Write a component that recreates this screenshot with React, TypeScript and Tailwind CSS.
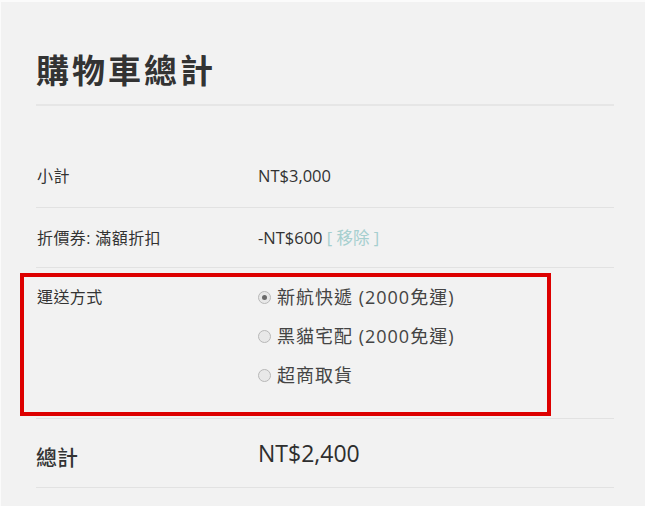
const font = "font-['Open_Sans','Noto_Sans_CJK_TC',sans-serif]";

type Row = { label: string; value: React.ReactNode; className: string };

function Radio({ checked }: { checked?: boolean }) {
  return (
    <span className="flex h-[13px] w-[13px] items-center justify-center rounded-full border border-[#b8b8b8] bg-[#e8e8e8]">
      {checked && <span className="h-[5px] w-[5px] rounded-full bg-[#6a6a6a]" />}
    </span>
  );
}

const shipping = [
  { name: "新航快遞 (2000免運)", checked: true },
  { name: "黑貓宅配 (2000免運)" },
  { name: "超商取貨" },
];

export default function App() {
  const rows: Row[] = [
    {
      label: "小計",
      value: "NT$3,000",
      className: "h-[62px] pt-[19px]",
    },
    {
      label: "折價券: 滿額折扣",
      value: (
        <span>
          -NT$600 <span className="text-[#a6cfcf]">[ 移除 ]</span>
        </span>
      ),
      className: "h-[60px] pt-[19px]",
    },
  ];

  return (
    <div
      className={`${font} relative h-[506px] w-[645px] overflow-hidden border-l border-t-2 border-[#fbfbfb] bg-[#f2f2f2] text-[#333]`}
    >
      <div className="ml-[35px] w-[578px]">
        <h2 className="border-b-2 border-[#e6e6e6] pb-[12px] pt-[48px] text-[33px] font-bold leading-[42px] tracking-[3px]">
          購物車總計
        </h2>

        <div className="mt-[40px]">
          {rows.map((row) => (
            <div
              key={row.label}
              className={`flex border-b border-[#e2e2e2] text-[16px] leading-[22px] ${row.className}`}
            >
              <div className="w-[222px] pl-px tracking-[0.4px]">{row.label}</div>
              <div className="text-[16.5px]">{row.value}</div>
            </div>
          ))}

          <div className="flex h-[151px] border-b border-[#e2e2e2] pt-[18px] text-[16px] leading-[22px]">
            <div className="w-[222px] pl-px tracking-[0.4px]">運送方式</div>
            <div className="flex flex-col gap-[16px]">
              {shipping.map((s) => (
                <label key={s.name} className="flex items-center gap-[6px] text-[18px] leading-[23px] text-[#444]">
                  <Radio checked={s.checked} />
                  <span className="tracking-[1px]">{s.name}</span>
                </label>
              ))}
            </div>
          </div>

          <div className="flex h-[69px] items-start border-b border-[#e2e2e2] pt-[20px]">
            <div className="w-[222px] pt-[4px] text-[21px] font-medium leading-[28px]">總計</div>
            <div className="text-[23px] font-medium leading-[28px] text-[#2e2e2e]">NT$2,400</div>
          </div>
        </div>
      </div>

      {/* highlight box drawn over the shipping row */}
      <div className="absolute left-[19px] top-[271px] h-[143px] w-[531px] border-4 border-[#dd0000]" />
    </div>
  );
}
